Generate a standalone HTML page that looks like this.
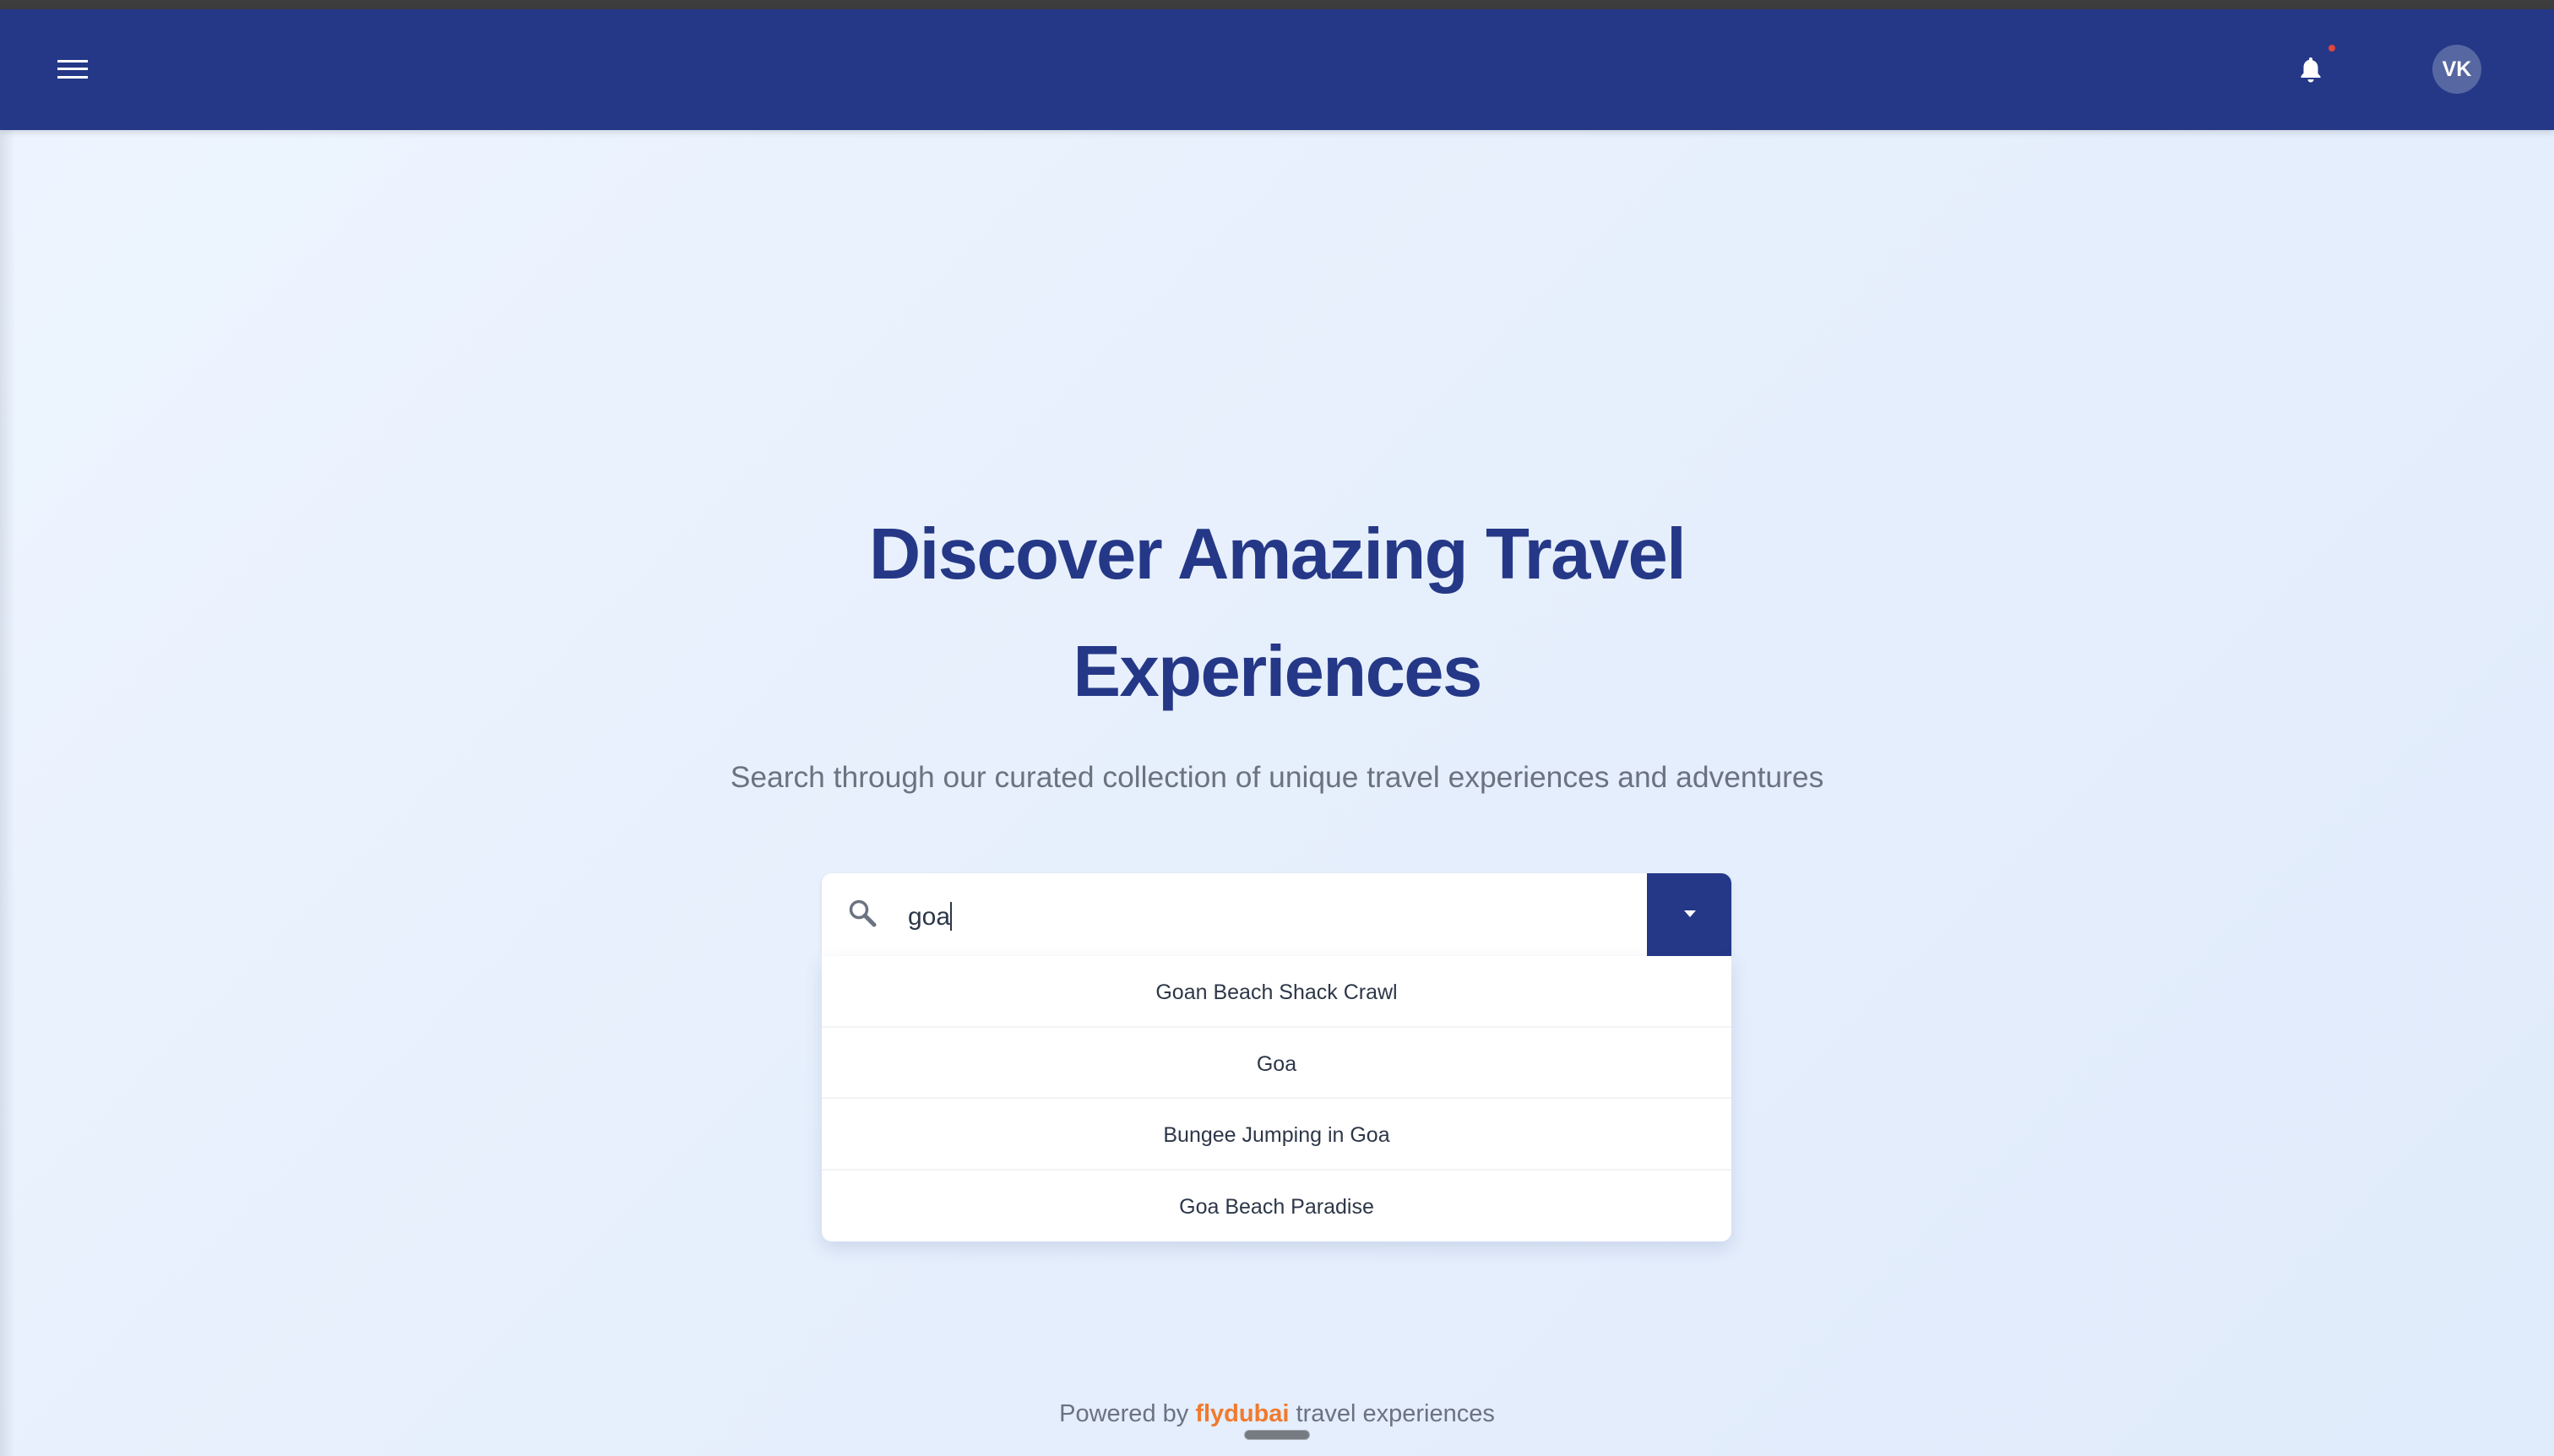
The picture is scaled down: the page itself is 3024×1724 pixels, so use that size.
<!DOCTYPE html>
<html><head><meta charset="utf-8"><style>
*{margin:0;padding:0;box-sizing:border-box}
html,body{width:3024px;height:1724px;overflow:hidden}
body{font-family:"Liberation Sans",sans-serif;background:linear-gradient(135deg,#eef5ff 0%,#e6effc 50%,#e0ebfb 100%);position:relative}
.top{position:absolute;left:0;top:0;width:3024px;height:11px;background:#3d3d3d}
.hdr{position:absolute;left:0;top:11px;width:3024px;height:143px;background:#253887;box-shadow:0 2px 8px rgba(0,0,0,.15)}
.leftshade{position:absolute;left:0;top:154px;width:18px;height:1570px;background:linear-gradient(90deg,rgba(150,160,180,.25),rgba(150,160,180,0))}
.hb{position:absolute;left:68px;width:36px;height:3px;background:#fff}
.av{position:absolute;left:2880px;top:53px;width:58px;height:58px;border-radius:50%;background:#5767a2;color:#fff;font-weight:bold;font-size:25px;text-align:center;line-height:58px}
.dot{position:absolute;left:2757px;top:53px;width:8px;height:8px;border-radius:50%;background:#e0463f}
h1{position:absolute;left:0;top:587px;width:3024px;text-align:center;color:#253887;font-size:85px;line-height:139px;font-weight:bold;letter-spacing:-1.6px}
.sub{position:absolute;left:0;top:900px;width:3024px;text-align:center;color:#6b7280;font-size:35.4px}
.box{position:absolute;left:973px;top:1034px;width:1077px;height:98px;background:#fff;border-radius:12px 12px 0 0;box-shadow:0 2px 6px rgba(0,0,0,.08);overflow:hidden}
.btn{position:absolute;right:0;top:0;width:100px;height:98px;background:#253887}
.btn:after{content:"";position:absolute;left:44px;top:44px;border-left:7px solid transparent;border-right:7px solid transparent;border-top:8px solid #fff}
.q{position:absolute;left:102px;top:34px;font-size:30px;color:#2d3748}
.caret{display:inline-block;width:2px;height:34px;background:#2d3748;vertical-align:-7px}
.dd{position:absolute;left:973px;top:1132px;width:1077px;height:338px;background:#fff;border-radius:0 0 12px 12px;box-shadow:0 8px 20px rgba(60,80,140,.15)}
.it{height:84.5px;line-height:86px;text-align:center;font-size:25px;color:#2d3748;border-bottom:2px solid #f1f3f6}
.it:last-child{border-bottom:none}
.ft{position:absolute;left:0;top:1658px;width:3024px;text-align:center;font-size:29px;color:#6b7280}
.ft b{color:#f07a2e}
.pill{position:absolute;left:1473px;top:1693px;width:78px;height:12px;border-radius:6px;background:#767a82;border:1px solid #a8acb0}
</style></head><body>
<div class="top"></div>
<div class="hdr">
<div class="hb" style="top:60px"></div><div class="hb" style="top:69px"></div><div class="hb" style="top:79px"></div>
<svg style="position:absolute;left:2722px;top:56px" width="28" height="31" viewBox="0 0 28 31"><path d="M14 1a2 2 0 0 1 2 2v1.3c4 1 6.5 4.5 6.5 8.7v7l3 3.5v1.5H2.5V23l3-3.5v-7c0-4.2 2.5-7.7 6.5-8.7V3a2 2 0 0 1 2-2z" fill="#fff"/><path d="M10.5 27h7a3.5 3.5 0 0 1-7 0z" fill="#fff"/></svg>
<div class="dot" style="top:42px"></div>
<div class="av" style="top:42px">VK</div>
</div>
<div class="leftshade"></div>
<h1>Discover Amazing Travel<br>Experiences</h1>
<div class="sub">Search through our curated collection of unique travel experiences and adventures</div>
<div class="box">
<svg style="position:absolute;left:31px;top:30px" width="34" height="34" viewBox="0 0 34 34"><circle cx="13" cy="13" r="9.5" fill="none" stroke="#6b7280" stroke-width="3.5"/><path d="M20 20l11 11" stroke="#6b7280" stroke-width="5" stroke-linecap="round"/></svg>
<div class="q">goa<span class="caret"></span></div>
<div class="btn"></div>
</div>
<div class="dd">
<div class="it">Goan Beach Shack Crawl</div>
<div class="it">Goa</div>
<div class="it">Bungee Jumping in Goa</div>
<div class="it">Goa Beach Paradise</div>
</div>
<div class="ft">Powered by <b>flydubai</b> travel experiences</div>
<div class="pill"></div>
</body></html>
